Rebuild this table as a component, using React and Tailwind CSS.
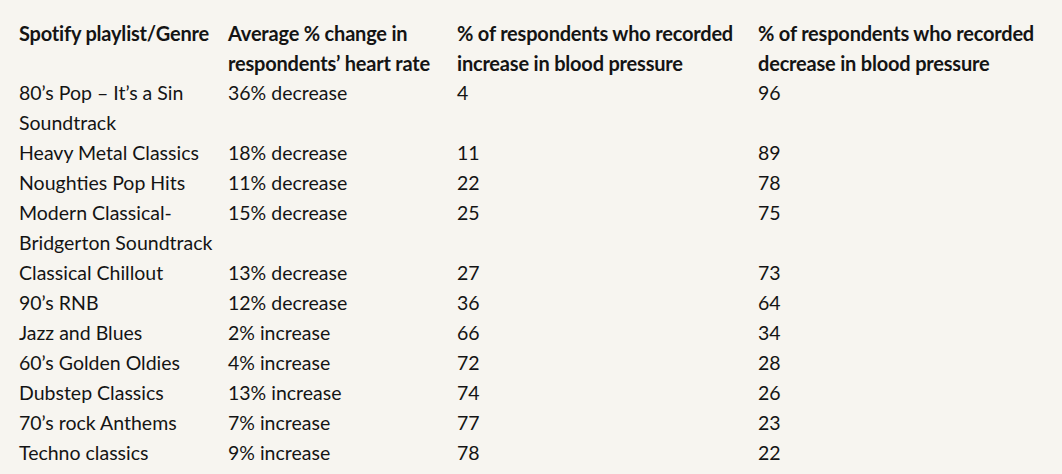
import React from 'react';

const rows = [
  ['80’s Pop – It’s a Sin Soundtrack', '36% decrease', '4', '96'],
  ['Heavy Metal Classics', '18% decrease', '11', '89'],
  ['Noughties Pop Hits', '11% decrease', '22', '78'],
  ['Modern Classical-Bridgerton Soundtrack', '15% decrease', '25', '75'],
  ['Classical Chillout', '13% decrease', '27', '73'],
  ['90’s RNB', '12% decrease', '36', '64'],
  ['Jazz and Blues', '2% increase', '66', '34'],
  ['60’s Golden Oldies', '4% increase', '72', '28'],
  ['Dubstep Classics', '13% increase', '74', '26'],
  ['70’s rock Anthems', '7% increase', '77', '23'],
  ['Techno classics', '9% increase', '78', '22'],
];

const headers = [
  'Spotify playlist/Genre',
  'Average % change in respondents’ heart rate',
  '% of respondents who recorded increase in blood pressure',
  '% of respondents who recorded decrease in blood pressure',
];

const App = () => {
  return (
    <div className="min-h-screen w-full bg-[#f7f5f0] pl-[19px] pt-[18px] font-['Lato','Liberation_Sans',sans-serif] text-[19.5px] leading-[30px] text-[#141414]">
      <table className="table-fixed border-collapse w-[1036px]">
        <colgroup>
          <col className="w-[209px]" />
          <col className="w-[229px]" />
          <col className="w-[301px]" />
          <col />
        </colgroup>
        <thead>
          <tr>
            {headers.map((h) => (
              <th key={h} className="p-0 pr-1 text-left align-top text-[20px] font-bold tracking-[-0.2px]">
                {h}
              </th>
            ))}
          </tr>
        </thead>
        <tbody>
          {rows.map((r) => (
            <tr key={r[0]}>
              {r.map((c, i) => (
                <td key={i} className="p-0 pr-1 align-top">
                  {c}
                </td>
              ))}
            </tr>
          ))}
        </tbody>
      </table>
    </div>
  );
};

export default App;
